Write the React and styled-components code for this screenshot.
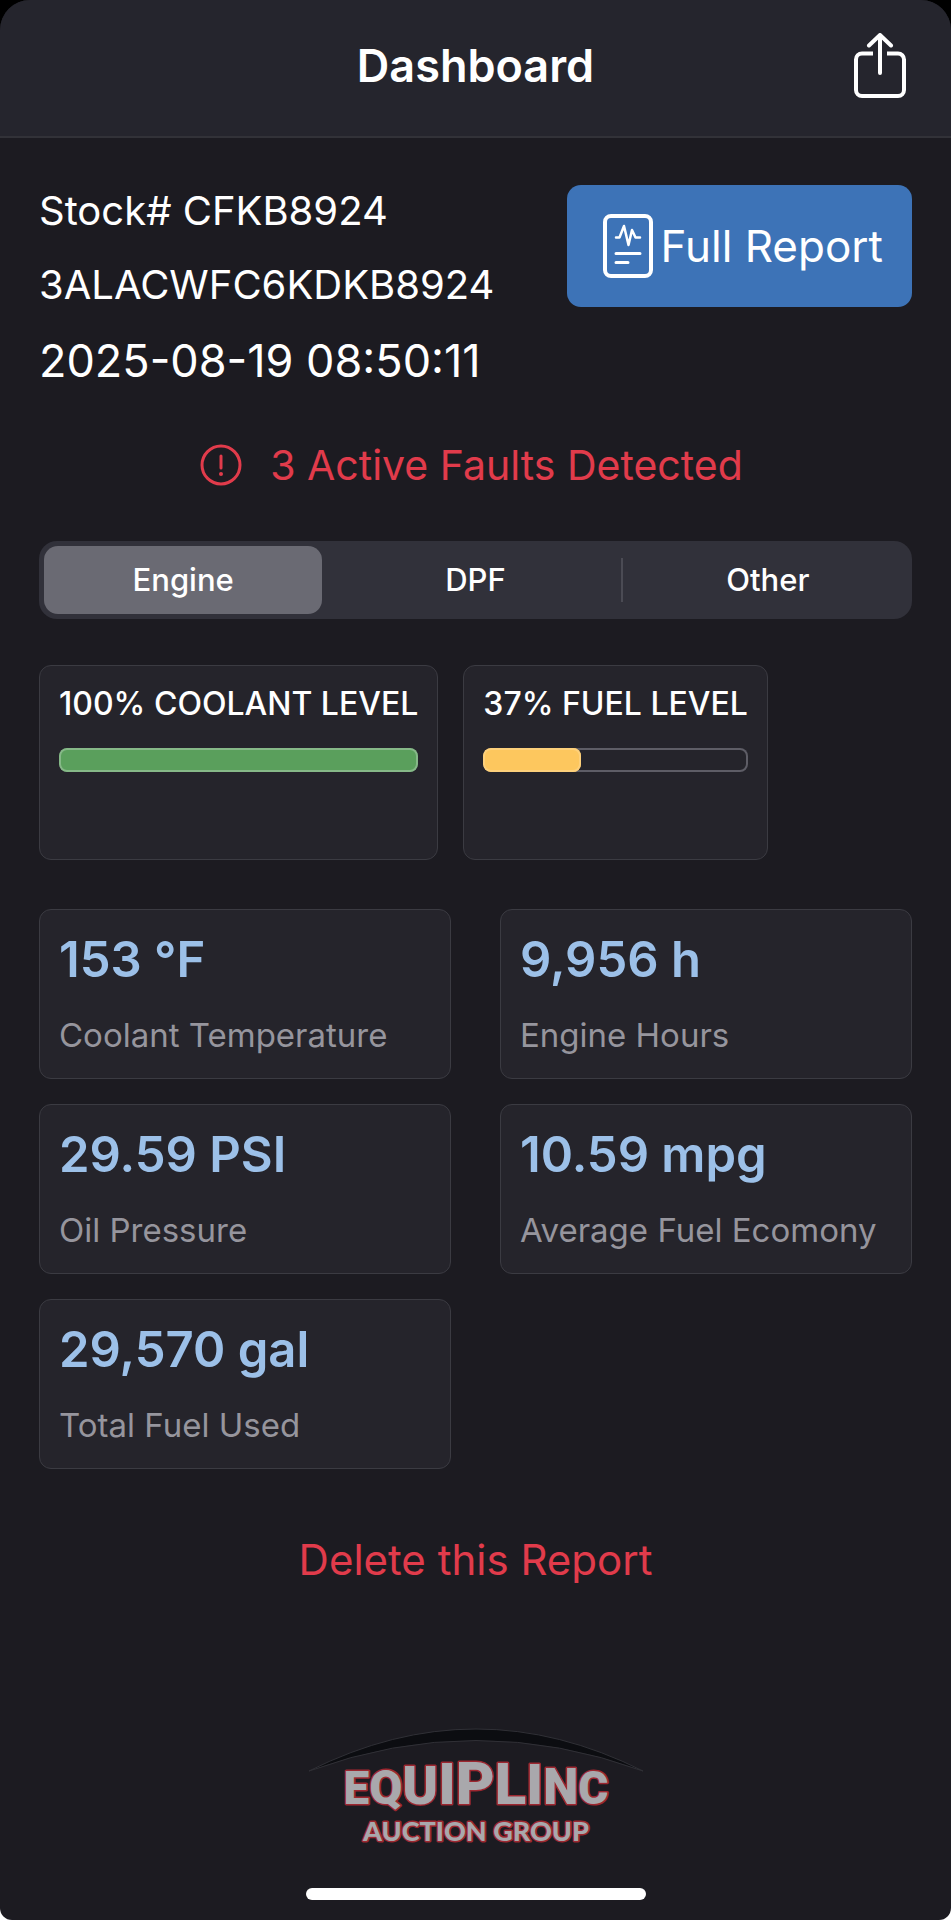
import React, { useState } from 'react';
import styled, { createGlobalStyle } from 'styled-components';

const GlobalStyle = createGlobalStyle`
  * {
    box-sizing: border-box;
  }
  body {
    margin: 0;
    background: linear-gradient(#000 50%, #fff 50%);
    color: #fff;
    font-family: Inter, "Liberation Sans", sans-serif;
  }
  button, input {
    font-family: inherit;
  }
`;

const Screen = styled.div`
  display: flex;
  flex-direction: column;
  min-height: 100vh;
  overflow: hidden;
  background: #1c1b21;
  border-radius: 30px 30px 12px 12px;
`;

const Header = styled.header`
  display: grid;
  grid-template-columns: 1fr auto 1fr;
  align-items: center;
  height: 138px;
  padding: 0 45px 4px;
  background: #25252d;
  border-bottom: 2px solid #323238;
`;

const Title = styled.h1`
  grid-column: 2;
  margin: 0;
  font-size: 45px;
  line-height: 56px;
  font-weight: 600;
`;

const IconButton = styled.button`
  justify-self: end;
  display: flex;
  padding: 0;
  border: 0;
  background: none;
  color: #fff;
  cursor: pointer;
`;

const Main = styled.main`
  display: flex;
  flex-direction: column;
  padding: 47px 39px 0;
`;

const Summary = styled.section`
  display: flex;
  justify-content: space-between;
  align-items: flex-start;
`;

const Vehicle = styled.div`
  display: flex;
  flex-direction: column;
  gap: 22px;
`;

const VehicleLine = styled.p`
  margin: 0;
  font-size: ${(p) => (p.$large ? '45px' : '40px')};
  line-height: ${(p) => (p.$large ? '56px' : '52px')};
`;

const ReportButton = styled.button`
  display: flex;
  align-items: center;
  gap: 8px;
  height: 122px;
  padding: 0 29px 0 36px;
  border: 0;
  border-radius: 14px;
  background: #3d73b7;
  color: #fff;
  font-size: 44px;
  line-height: 52px;
  cursor: pointer;
`;

const Faults = styled.p`
  display: flex;
  justify-content: center;
  align-items: center;
  gap: 28px;
  margin: 50px 0;
  padding-right: 8px;
  color: #e13b4b;
  font-size: 41px;
  line-height: 52px;
`;

const Segments = styled.div`
  display: grid;
  grid-template-columns: repeat(3, 1fr);
  gap: 14px;
  height: 78px;
  padding: 5px;
  border-radius: 18px;
  background: #31313a;
`;

const Segment = styled.label`
  position: relative;
  display: flex;
  align-items: center;
  justify-content: center;
  border-radius: 14px;
  font-size: 31px;
  line-height: 40px;
  font-weight: 500;
  cursor: pointer;
  background: ${(p) => (p.$active ? '#6a6a73' : 'transparent')};

  &::before {
    content: '';
    position: absolute;
    left: -8px;
    top: 12px;
    bottom: 12px;
    width: 2px;
    background: ${(p) => (p.$divided ? '#4b4b54' : 'transparent')};
  }
  input {
    position: absolute;
    opacity: 0;
  }
`;

const Levels = styled.section`
  display: flex;
  gap: 25px;
  margin-top: 46px;
`;

const Card = styled.div`
  border: 1px solid #3b3b42;
  border-radius: 12px;
  background: #25242b;
`;

const LevelCard = styled(Card)`
  height: 195px;
  padding: 18px 19px;
`;

const LevelTitle = styled.h2`
  margin: 0 0 24px;
  font-size: 32px;
  line-height: 40px;
  font-weight: 500;
`;

const Track = styled.div`
  height: 24px;
  border-radius: 8px;
  overflow: hidden;
  box-shadow: inset 0 0 0 2px #5e5d66;
`;

const Fill = styled.div`
  height: 100%;
  border-radius: 8px;
  background: ${(p) => p.$color};
  box-shadow: inset 0 0 0 2px ${(p) => p.$edge};
`;

const Metrics = styled.section`
  display: grid;
  grid-template-columns: repeat(2, 1fr);
  gap: 25px 49px;
  margin-top: 49px;
`;

const MetricCard = styled(Card)`
  display: flex;
  flex-direction: column;
  gap: 23px;
  height: 170px;
  padding: 18px 19px;
`;

const Value = styled.strong`
  color: #9cc0e8;
  font-size: 49px;
  line-height: 64px;
  font-weight: 600;
`;

const Label = styled.span`
  color: #96959d;
  font-size: 33px;
  line-height: 40px;
  white-space: nowrap;
`;

const DeleteButton = styled.button`
  align-self: center;
  margin-top: 65px;
  padding: 0;
  border: 0;
  background: none;
  color: #e13b4b;
  font-size: 42px;
  line-height: 52px;
  cursor: pointer;
`;

const Footer = styled.footer`
  display: flex;
  flex-direction: column;
  align-items: center;
  gap: 32px;
  margin-top: auto;
  padding: 100px 0 20px;
`;

const HomeBar = styled.div`
  width: 340px;
  height: 12px;
  border-radius: 6px;
  background: #fff;
`;

const tabs = ['Engine', 'DPF', 'Other'];

const levels = [
  { name: 'COOLANT LEVEL', percent: 100, color: '#5a9f5c', edge: '#86b888' },
  { name: 'FUEL LEVEL', percent: 37, color: '#fdc75e', edge: '#fdd07b' },
];

const metrics = [
  { value: '153 °F', label: 'Coolant Temperature' },
  { value: '9,956 h', label: 'Engine Hours' },
  { value: '29.59 PSI', label: 'Oil Pressure' },
  { value: '10.59 mpg', label: 'Average Fuel Ecomony' },
  { value: '29,570 gal', label: 'Total Fuel Used' },
];

function ShareIcon() {
  return (
    <svg width="52" height="66" viewBox="0 0 52 66" fill="none" stroke="#fff" strokeWidth="4" strokeLinecap="round" strokeLinejoin="round">
      <path d="M19 20.500H8a6 6 0 0 0-6 6V57a6 6 0 0 0 6 6h36a6 6 0 0 0 6-6V26.500a6 6 0 0 0-6-6H33" strokeLinecap="butt" />
      <path d="M26 40V2M15 12.500 26 2l11 10.500" />
    </svg>
  );
}

function ReportIcon() {
  return (
    <svg width="50" height="64" viewBox="0 0 50 64" fill="none" stroke="#fff" strokeLinecap="round" strokeLinejoin="round">
      <rect x="2" y="2" width="46" height="60" rx="6" strokeWidth="4" />
      <path d="M13 23.500h3.500L21 12l4.500 19L29 16l3.500 7.500H37" strokeWidth="2.500" />
      <path d="M13 39.500h24M13 48.500h12" strokeWidth="3" />
    </svg>
  );
}

function AlertIcon() {
  return (
    <svg width="42" height="42" viewBox="0 0 42 42" fill="none" stroke="#e13b4b" strokeWidth="3" strokeLinecap="round">
      <circle cx="21" cy="21" r="19" />
      <path d="M21 12v12" />
      <circle cx="21" cy="30" r="2" fill="#e13b4b" stroke="none" />
    </svg>
  );
}

// font size of each letter follows the curve of the arch
const logoLetters = [
  ['E', 46], ['Q', 48], ['U', 54], ['I', 58], ['P', 60], ['L', 58], ['I', 56], ['N', 50], ['C', 46],
];

function Logo() {
  return (
    <svg width="336" height="128" viewBox="0 0 336 128" role="img" aria-label="Equiplinc Auction Group">
      <path d="M1 43Q168-41 335 43Q168-18 1 43Z" fill="#0c0d11" stroke="#303036" strokeWidth="1" />
      <g fill="#a9a8ac" stroke="#9c2730" strokeWidth="3" paintOrder="stroke" strokeLinejoin="round" textAnchor="middle" fontWeight="900">
        <text x="168" y="76" fontFamily="Roboto, sans-serif">
          {logoLetters.map(([char, size], i) => (
            <tspan key={i} fontSize={size}>{char}</tspan>
          ))}
        </text>
        <text x="168" y="113" fontSize="27" fontFamily="Lato, sans-serif">AUCTION GROUP</text>
      </g>
    </svg>
  );
}

export default function App() {
  const [tab, setTab] = useState('Engine');

  return (
    <>
      <GlobalStyle />
      <Screen>
        <Header>
          <Title>Dashboard</Title>
          <IconButton type="button" aria-label="Share"><ShareIcon /></IconButton>
        </Header>
        <Main>
          <Summary>
            <Vehicle>
              <VehicleLine>Stock# CFKB8924</VehicleLine>
              <VehicleLine>3ALACWFC6KDKB8924</VehicleLine>
              <VehicleLine $large>2025-08-19 08:50:11</VehicleLine>
            </Vehicle>
            <ReportButton type="button"><ReportIcon />Full Report</ReportButton>
          </Summary>
          <Faults><AlertIcon />3 Active Faults Detected</Faults>
          <Segments role="radiogroup" aria-label="Section">
            {tabs.map((name, i) => (
              <Segment key={name} $active={tab === name} $divided={i > 0 && tab !== name && tab !== tabs[i - 1]}>
                <input type="radio" name="section" checked={tab === name} onChange={() => setTab(name)} />
                {name}
              </Segment>
            ))}
          </Segments>
          <Levels>
            {levels.map((level) => (
              <LevelCard key={level.name}>
                <LevelTitle>{level.percent}% {level.name}</LevelTitle>
                <Track role="progressbar" aria-label={level.name} aria-valuenow={level.percent}>
                  <Fill $color={level.color} $edge={level.edge} style={{ width: `${level.percent}%` }} />
                </Track>
              </LevelCard>
            ))}
          </Levels>
          <Metrics>
            {metrics.map((metric) => (
              <MetricCard key={metric.label}>
                <Value>{metric.value}</Value>
                <Label>{metric.label}</Label>
              </MetricCard>
            ))}
          </Metrics>
          <DeleteButton type="button">Delete this Report</DeleteButton>
        </Main>
        <Footer>
          <Logo />
          <HomeBar />
        </Footer>
      </Screen>
    </>
  );
}
